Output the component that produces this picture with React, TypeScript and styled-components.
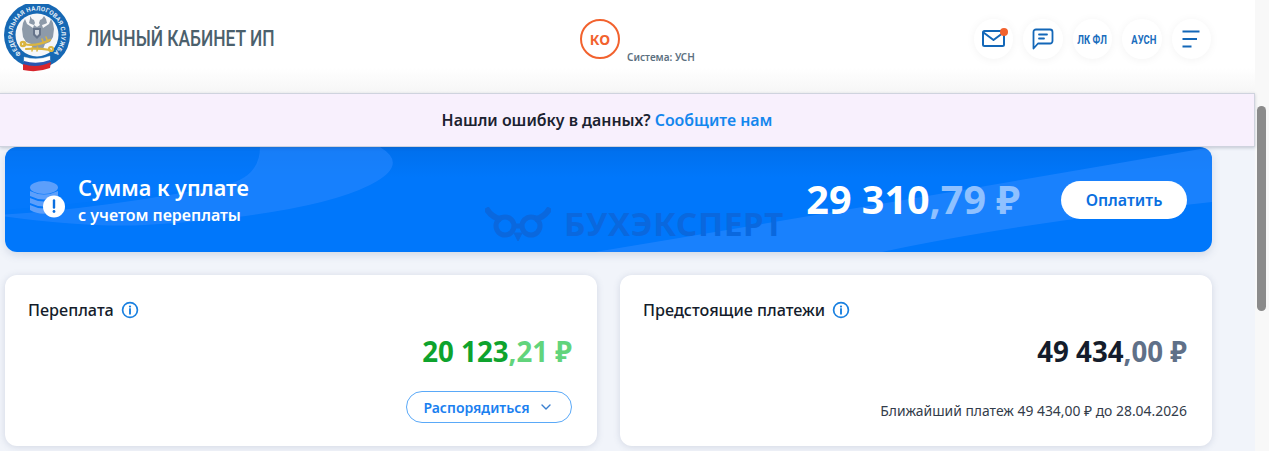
import React from 'react';
import styled, { createGlobalStyle } from 'styled-components';

const GlobalStyle = createGlobalStyle`
  html, body {
    margin: 0;
    height: 451px;
    overflow: hidden;
    background: #f1f4fa;
    font-family: "Noto Sans", "Open Sans", sans-serif;
  }
  * { box-sizing: border-box; }
`;

const Page = styled.div`
  display: flex;
  width: 1269px;
  height: 451px;
  overflow: hidden;
`;

const Main = styled.div`
  width: 1255px;
  flex: none;
  display: flex;
  flex-direction: column;
`;

const ScrollTrack = styled.div`
  flex: 1;
  background: #f8f8f8;
  padding: 106px 3px 0 2px;
`;

const ScrollThumb = styled.div`
  height: 205px;
  border-radius: 5px;
  background: #8b8b8b;
`;

const Header = styled.header`
  height: 93px;
  display: grid;
  grid-template-columns: 580px 393px 1fr;
  background: linear-gradient(#fff 0, #fff 68px, #f6f6f6 93px);
`;

const Brand = styled.div`
  display: flex;
  align-items: flex-start;
  padding: 4px 0 0 4px;
`;

const Title = styled.div`
  margin: 22px 0 0 15px;
  font-family: Roboto, sans-serif;
  font-size: 22px;
  font-weight: 500;
  line-height: 26px;
  color: #4b606c;
  white-space: nowrap;
  transform: scaleX(0.79);
  transform-origin: left center;
`;

const Role = styled.div`
  display: flex;
  align-items: flex-start;
  gap: 7px;
  padding-top: 19px;
`;

const RoleBadge = styled.div`
  width: 40px;
  height: 40px;
  border-radius: 50%;
  border: 2px solid #f2622e;
  display: flex;
  align-items: center;
  justify-content: center;
  font-size: 14px;
  font-weight: 700;
  color: #f2622e;
`;

const RoleText = styled.div`
  margin-top: 31px;
  font-size: 10px;
  font-weight: 600;
  line-height: 14px;
  color: #5b7080;
  white-space: nowrap;
`;

const Actions = styled.div`
  display: flex;
  gap: 10px;
  padding-top: 19px;
  margin-left: 0.5px;
`;

const RoundButton = styled.div`
  position: relative;
  width: 39.5px;
  height: 39.5px;
  border-radius: 50%;
  background: #fff;
  box-shadow: 0 1px 10px rgba(0, 0, 0, 0.05);
  display: flex;
  align-items: center;
  justify-content: center;
  font-family: Roboto, sans-serif;
  color: #1a6dbd;
`;

const ButtonLabel = styled.span<{ $shift?: number }>`
  font-size: 13.5px;
  font-weight: 700;
  white-space: nowrap;
  transform: scaleX(0.7);
  margin-left: ${(p) => p.$shift ?? 0}px;
`;

const Dot = styled.span`
  position: absolute;
  top: 9px;
  right: 5px;
  width: 8px;
  height: 8px;
  border-radius: 50%;
  background: #f2622e;
`;

const Notice = styled.div`
  height: 54px;
  flex: none;
  padding-right: 40px;
  display: flex;
  align-items: center;
  justify-content: center;
  background: #f8f0fd;
  border: 1px solid #cfd3de;
  border-left: 0;
  font-size: 15.9px;
  font-weight: 600;
  color: #1b2230;
  box-shadow: 0 1px 3px rgba(60, 70, 100, 0.25);
  position: relative;
  z-index: 1;
`;

const NoticeLink = styled.a`
  margin-left: 4px;
  color: #1487ee;
`;

const Content = styled.div`
  padding: 0 43px 0 5px;
`;

const Banner = styled.section`
  position: relative;
  height: 105px;
  border-radius: 12px;
  overflow: hidden;
  background: linear-gradient(#006fec, #0077fb 30px);
  display: flex;
  align-items: center;
  padding: 0 25px 0 24px;
  box-shadow: 0 3px 8px rgba(80, 100, 140, 0.18);
`;

const BannerArt = styled.svg`
  position: absolute;
  inset: 0;
  width: 100%;
  height: 100%;
`;

const Watermark = styled.div`
  position: absolute;
  left: 480px;
  top: 58px;
  display: flex;
  align-items: center;
  gap: 13px;
  color: #0a68de;
  font-size: 33px;
  font-weight: 700;
  line-height: 38px;
  letter-spacing: 0.7px;
  white-space: nowrap;
`;

const BannerTitles = styled.div`
  position: relative;
  margin-left: 13px;
  flex: 1;
  color: #fff;
`;

const BannerTitle = styled.div`
  font-size: 21.6px;
  font-weight: 600;
  line-height: 28px;
`;

const BannerNote = styled.div`
  margin-top: 3px;
  font-size: 16px;
  font-weight: 600;
  line-height: 20px;
`;

const Coins = styled.svg`
  position: relative;
  flex: none;
`;

const Amount = styled.div<{ $size: number; $main: string; $minor: string }>`
  position: relative;
  font-size: ${(p) => p.$size}px;
  font-weight: 700;
  line-height: 1.3;
  color: ${(p) => p.$main};
  white-space: nowrap;
  text-align: right;
  & > span {
    color: ${(p) => p.$minor};
  }
`;

const PayButton = styled.div`
  position: relative;
  margin-left: 41px;
  width: 126px;
  height: 38px;
  border-radius: 19px;
  background: #fff;
  color: #0a6fe0;
  font-size: 16px;
  font-weight: 600;
  display: flex;
  align-items: center;
  justify-content: center;
`;

const Cards = styled.div`
  margin-top: 23px;
  display: grid;
  grid-template-columns: 592px 592px;
  gap: 23px;
`;

const Card = styled.section`
  height: 171px;
  border-radius: 12px;
  background: #fff;
  padding: 24px 25px 0 23px;
  box-shadow: 0 1px 7px rgba(70, 90, 130, 0.18);
  display: flex;
  flex-direction: column;
`;

const CardTitle = styled.div`
  display: flex;
  align-items: center;
  gap: 7px;
  height: 22px;
  font-size: 16.2px;
  font-weight: 500;
  color: #141c2b;
`;

const CardAmount = styled.div`
  margin-top: 12px;
`;

const ActionRow = styled.div`
  margin-top: 22px;
  display: flex;
  justify-content: flex-end;
`;

const OutlineButton = styled.div`
  width: 166px;
  height: 32px;
  border: 1.5px solid #5aa9f8;
  border-radius: 16px;
  display: flex;
  align-items: center;
  justify-content: center;
  gap: 11px;
  padding-right: 4px;
  font-size: 14px;
  font-weight: 600;
  color: #1a80f0;
`;

const Caption = styled.div`
  margin-top: 33px;
  font-size: 13.9px;
  line-height: 18px;
  color: #333c4a;
  text-align: right;
`;

const InfoIcon = () => (
  <svg width="18" height="18" viewBox="0 0 18 18" fill="none">
    <circle cx="9" cy="9" r="7.4" stroke="#1a80e0" strokeWidth="1.7" />
    <circle cx="9" cy="5.6" r="1.1" fill="#1a80e0" />
    <path d="M9 8v4.8" stroke="#1a80e0" strokeWidth="1.9" strokeLinecap="round" />
  </svg>
);

const Logo = () => (
  <svg width="68" height="70" viewBox="0 0 68 70">
    <defs>
      <path id="ring" d="M17.25 49.8A24.5 24.5 0 1 1 48.75 49.8" />
    </defs>
    <circle cx="33" cy="31" r="33" fill="#1668b4" />
    <circle cx="33" cy="31" r="21.5" fill="#f6f7f9" />
    <text fontFamily="Roboto, sans-serif" fontSize="6.2" fontWeight="700" fill="#e6eff7">
      <textPath href="#ring" textLength="118">ФЕДЕРАЛЬНАЯ НАЛОГОВАЯ СЛУЖБА</textPath>
    </text>
    {/* орёл */}
    <g fill="#8d9aa9">
      <path d="M26 12l2 3 2 1 1 3-1 2 3 2 3-2-1-2 1-3 2-1 2-3 2 3 1 4-2 1-3 1 1 3 6-4 2-5 2 4 1 6-1 8-3 5-5 2-2 5h-10l-2-5-5-2-3-5-1-8 1-6 2-4 2 5 6 4 1-3-3-1-2-1 1-4z" />
    </g>
    <path d="M29 24h8v7l-4 4-4-4z" fill="#66748a" />
    <path d="M31 26h4v4l-2 2-2-2z" fill="#cfd6de" />
    {/* ключи */}
    <g stroke="#d9b440" strokeWidth="2.2" fill="none" strokeLinecap="round">
      <path d="M20 40q12 3 26-4M22 45q12-1 24 1" />
      <circle cx="19" cy="40" r="2.2" />
      <circle cx="47" cy="45" r="2" />
      <path d="M42 33l1.5 4M38 35l1.5 4M28 47l.5-4M33 47l.5-4" strokeWidth="1.5" />
    </g>
    {/* лента */}
    <path d="M20 53q13 4 26-1v5q-13 5-26 1z" fill="#fff" stroke="#d8dde5" strokeWidth=".4" />
    <path d="M20 57q13 4 26-1v5q-13 5-26 1z" fill="#2a56b0" />
    <path d="M19 60q14 5 28-2l-1 6q-13 5-27 2z" fill="#d7252c" />
  </svg>
);

const Mail = () => (
  <svg width="23" height="17" viewBox="0 0 23 17" fill="none" stroke="#1367b8" strokeWidth="2" strokeLinejoin="round">
    <rect x="1" y="1" width="21" height="15" rx="1.5" />
    <path d="M1.5 2.5l10 7.5 10-7.5" />
  </svg>
);

const Chat = () => (
  <svg width="22" height="22" viewBox="0 0 22 22" fill="none" stroke="#1367b8" strokeWidth="1.8" strokeLinecap="round" strokeLinejoin="round">
    <path d="M1.5 20.5V4a2.5 2.5 0 0 1 2.5-2.5h14A2.5 2.5 0 0 1 20.5 4v9a2.5 2.5 0 0 1-2.5 2.5H6z" />
    <path d="M7 6.5h8M7 10.5h5" />
  </svg>
);

const Burger = () => (
  <svg width="18" height="18" viewBox="0 0 18 18" fill="none" stroke="#1367b8" strokeWidth="1.8">
    <path d="M.5 1.500h17M.5 9h14.500M.5 16.500h9" />
  </svg>
);

const CoinStack = () => (
  <Coins width="36" height="38" viewBox="0 0 36 38">
    <g fill="#5c9ffb">
      <ellipse cx="15" cy="6.5" rx="14" ry="6.5" />
      <path d="M1 10q14 7 28 0v5q-14 7-28 0zM1 17q14 7 28 0v5q-14 7-28 0zM1 24q14 7 28 0v4q-14 9-28 1z" />
    </g>
    <circle cx="25" cy="25.5" r="11" fill="#fff" />
    <path d="M25 19.5v7" stroke="#0a6fe0" strokeWidth="2.4" strokeLinecap="round" />
    <circle cx="25" cy="30.5" r="1.4" fill="#0a6fe0" />
  </Coins>
);

const Owl = () => (
  <svg width="66" height="34" viewBox="0 0 66 34" fill="none" stroke="#0a68de" strokeWidth="5">
    <circle cx="20" cy="19" r="9" />
    <circle cx="46" cy="19" r="9" />
    <path d="M1 1q6 10 15 11M65 1q-6 10-15 11" strokeWidth="6" />
    <path d="M29 19h8" />
    <path d="M29 26l4 8 4-8z" fill="#0a68de" strokeWidth="1" />
  </svg>
);

const Chevron = () => (
  <svg width="10" height="6" viewBox="0 0 10 6" fill="none" stroke="#3a7fd0" strokeWidth="1.4" strokeLinecap="round" strokeLinejoin="round">
    <path d="M1 1l4 4 4-4" />
  </svg>
);

export default function App() {
  return (
    <Page>
      <GlobalStyle />
      <Main>
        <Header>
          <Brand>
            <Logo />
            <Title>ЛИЧНЫЙ КАБИНЕТ ИП</Title>
          </Brand>
          <Role>
            <RoleBadge>КО</RoleBadge>
            <RoleText>Система: УСН</RoleText>
          </Role>
          <Actions>
            <RoundButton>
              <Mail />
              <Dot />
            </RoundButton>
            <RoundButton>
              <Chat />
            </RoundButton>
            <RoundButton>
              <ButtonLabel>ЛК ФЛ</ButtonLabel>
            </RoundButton>
            <RoundButton>
              <ButtonLabel $shift={5}>АУСН</ButtonLabel>
            </RoundButton>
            <RoundButton>
              <Burger />
            </RoundButton>
          </Actions>
        </Header>
        <Notice>
          Нашли ошибку в данных? <NoticeLink>Сообщите нам</NoticeLink>
        </Notice>
        <Content>
          <Banner>
            <BannerArt viewBox="0 0 1207 105" preserveAspectRatio="none">
              <path d="M255 0q3 32-30 37-90 14-225 26V0z" fill="#0a7cff" opacity="0.35" />
              <path d="M255 0h120q30 18-10 38-60 30-225 40-60 3-150-10 100-5 230-30 35-8 35-38z" fill="#2a88ff" opacity="0.55" />
              <path d="M590 105q300-50 617-105v55q-200 22-330 50z" fill="#2a88ff" opacity="0.6" />
            </BannerArt>
            <Watermark>
              <Owl />
              БУХЭКСПЕРТ
            </Watermark>
            <CoinStack />
            <BannerTitles>
              <BannerTitle>Сумма к уплате</BannerTitle>
              <BannerNote>с учетом переплаты</BannerNote>
            </BannerTitles>
            <Amount $size={39.5} $main="#fff" $minor="#8fc1ff">
              29 310<span>,79 ₽</span>
            </Amount>
            <PayButton>Оплатить</PayButton>
          </Banner>
          <Cards>
            <Card>
              <CardTitle>
                Переплата <InfoIcon />
              </CardTitle>
              <CardAmount>
                <Amount $size={27.7} $main="#0ea32d" $minor="#62d47c">
                  20 123<span>,21 ₽</span>
                </Amount>
              </CardAmount>
              <ActionRow>
                <OutlineButton>
                  Распорядиться <Chevron />
                </OutlineButton>
              </ActionRow>
            </Card>
            <Card>
              <CardTitle>
                Предстоящие платежи <InfoIcon />
              </CardTitle>
              <CardAmount>
                <Amount $size={27.7} $main="#141c2b" $minor="#5f7088">
                  49 434<span>,00 ₽</span>
                </Amount>
              </CardAmount>
              <Caption>Ближайший платеж 49 434,00 ₽ до 28.04.2026</Caption>
            </Card>
          </Cards>
        </Content>
      </Main>
      <ScrollTrack>
        <ScrollThumb />
      </ScrollTrack>
    </Page>
  );
}
